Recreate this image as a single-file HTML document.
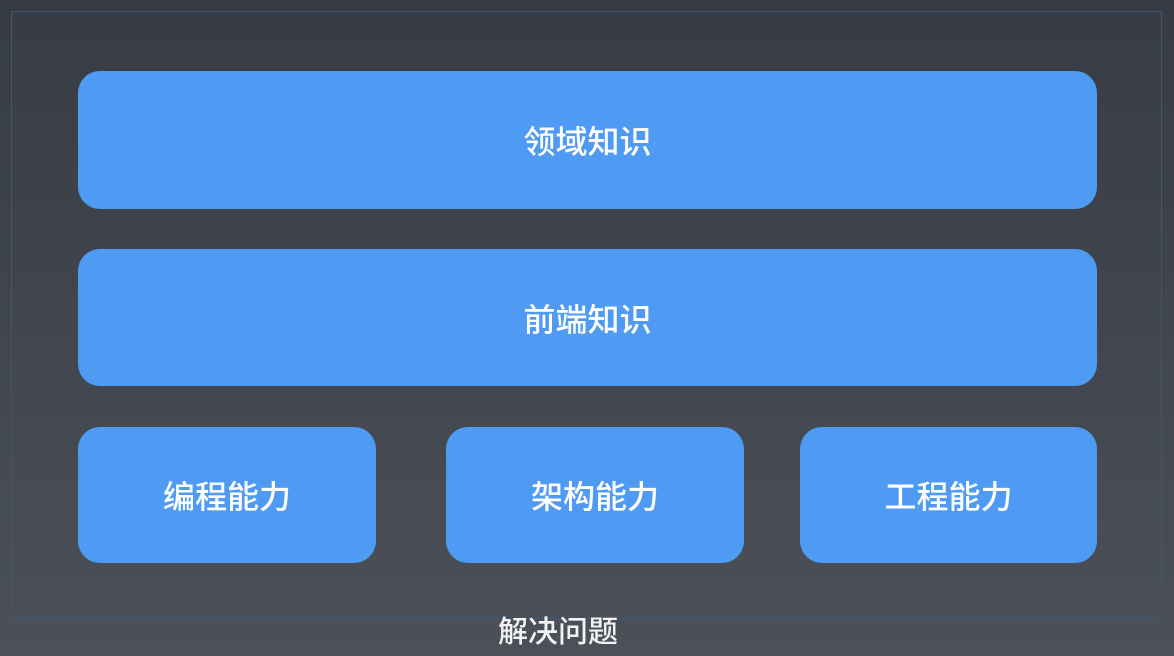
<!DOCTYPE html>
<html><head><meta charset="utf-8"><style>
html,body{margin:0;padding:0}
body{width:1174px;height:656px;position:relative;overflow:hidden;background:linear-gradient(#373c44,#4b5059);font-family:"Liberation Sans","Noto Sans CJK SC",sans-serif}
.frame{position:absolute;left:11px;top:11px;width:1151px;height:608px;border:1px solid #3b5878;box-sizing:border-box}
.b{position:absolute;background:#4f9bf3;border-radius:22px;color:#fff;font-size:32px;font-weight:500;display:flex;align-items:center;justify-content:center}
.lbl{position:absolute;left:498px;top:607px;color:#f2f2f2;font-size:30px;font-weight:500}
</style></head><body>
<div class="frame"></div>
<div class="b" style="left:78px;top:71px;width:1019px;height:138px">领域知识</div>
<div class="b" style="left:78px;top:249px;width:1019px;height:137px">前端知识</div>
<div class="b" style="left:78px;top:427px;width:298px;height:136px">编程能力</div>
<div class="b" style="left:446px;top:427px;width:298px;height:136px">架构能力</div>
<div class="b" style="left:800px;top:427px;width:297px;height:136px">工程能力</div>
<div class="lbl">解决问题</div>
</body></html>
